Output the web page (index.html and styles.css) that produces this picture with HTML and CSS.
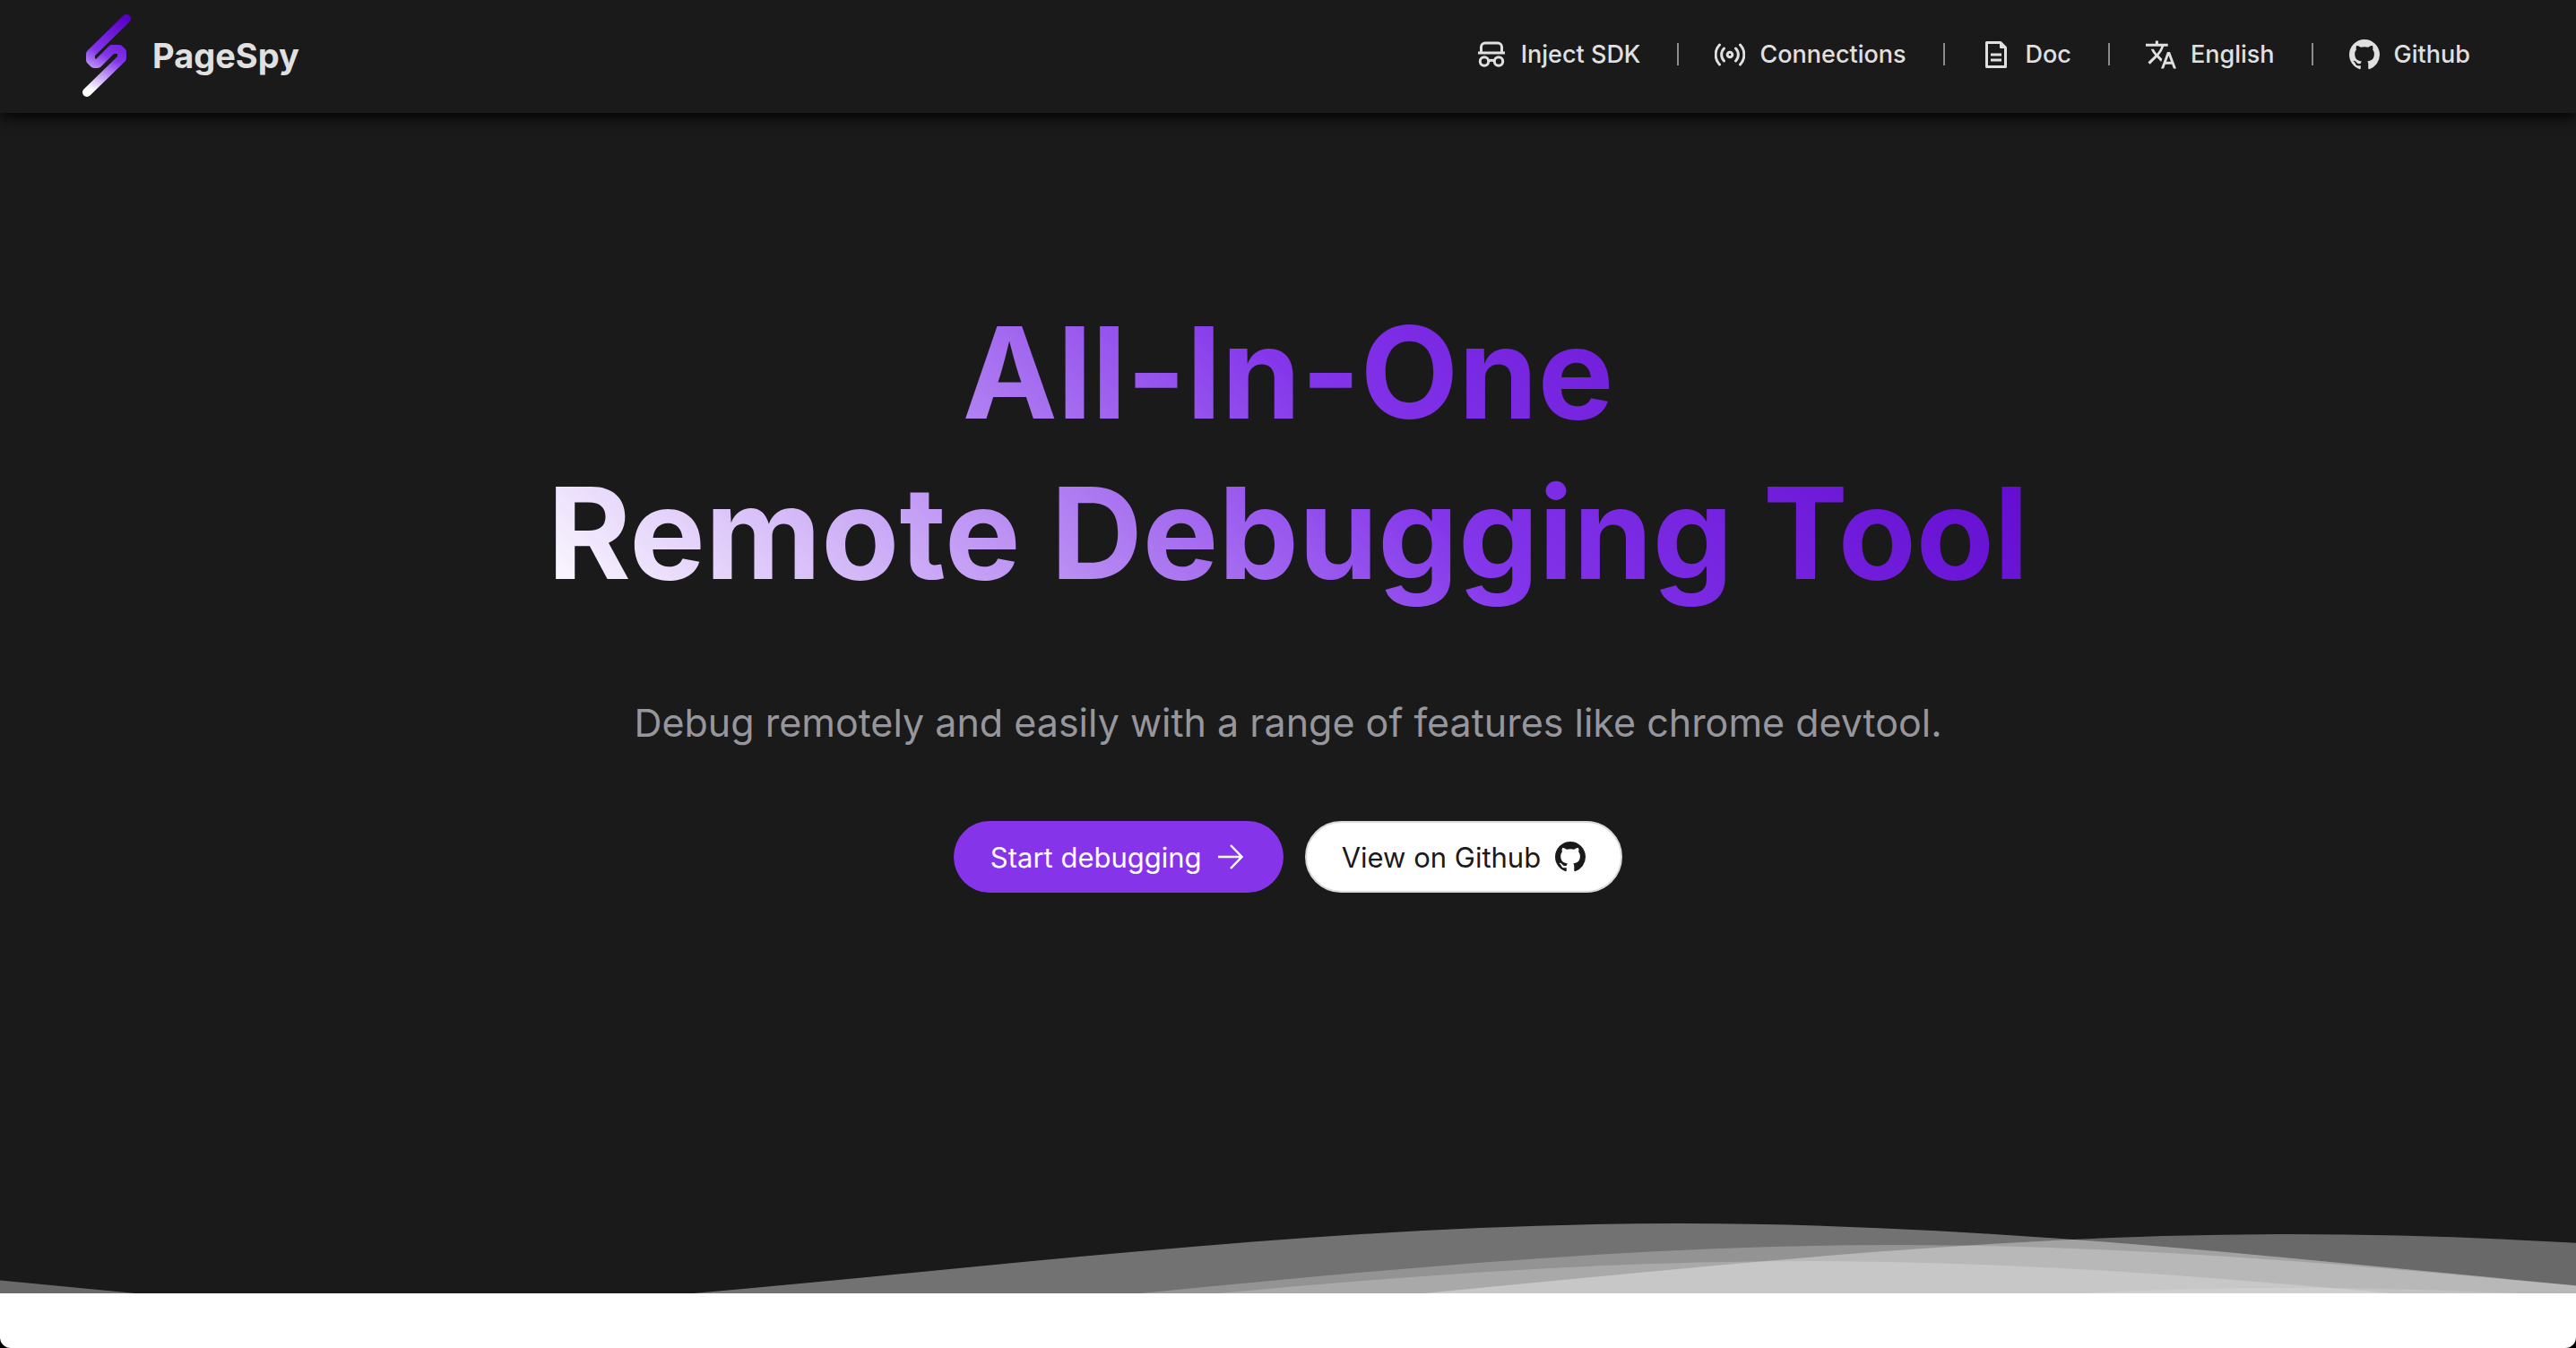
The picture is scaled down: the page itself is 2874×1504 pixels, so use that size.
FILE: index.html
```html
<!DOCTYPE html>
<html lang="en">
<head>
<meta charset="utf-8">
<meta name="viewport" content="width=device-width, initial-scale=1">
<title>PageSpy</title>
<link rel="stylesheet" href="styles.css">
</head>
<body>
<svg class="defs" aria-hidden="true">
  <symbol id="github" viewBox="0 0 16 16"><path fill="currentColor" d="M8 0C3.58 0 0 3.58 0 8c0 3.54 2.29 6.53 5.47 7.59.4.07.55-.17.55-.38 0-.19-.01-.82-.01-1.49-2.01.37-2.53-.49-2.69-.94-.09-.23-.48-.94-.82-1.13-.28-.15-.68-.52-.01-.53.63-.01 1.08.58 1.23.82.72 1.21 1.87.87 2.33.66.07-.52.28-.87.51-1.07-1.78-.2-3.64-.89-3.64-3.95 0-.87.31-1.59.82-2.15-.08-.2-.36-1.02.08-2.12 0 0 .67-.21 2.2.82.64-.18 1.32-.27 2-.27s1.36.09 2 .27c1.53-1.04 2.2-.82 2.2-.82.44 1.1.16 1.92.08 2.12.51.56.82 1.27.82 2.15 0 3.07-1.87 3.75-3.65 3.95.29.25.54.73.54 1.48 0 1.07-.01 1.93-.01 2.2 0 .21.15.46.55.38A8.01 8.01 0 0 0 16 8c0-4.42-3.58-8-8-8z"/></symbol>
</svg>
<header class="header">
  <a class="brand" href="#">
    <svg class="logo" viewBox="0 0 54 92" aria-hidden="true">
      <defs><linearGradient id="logo-fill" gradientUnits="userSpaceOnUse" x1="48" y1="4" x2="6" y2="88">
        <stop offset="0" stop-color="#5a00c8"/><stop offset=".5" stop-color="#8335ea"/><stop offset=".95" stop-color="#fff"/>
      </linearGradient></defs>
      <path fill="none" stroke="url(#logo-fill)" stroke-width="10" stroke-linecap="round" stroke-linejoin="round" d="M49 5 9 44v7l4 4h4L33 39h8l3 3v7L5 87"/>
    </svg>
    <span class="brand-name">PageSpy</span>
  </a>
  <nav class="nav">
    <a class="nav-link" href="#">
      <svg class="icon" viewBox="0 0 34 34" fill="none" stroke="currentColor" stroke-width="3" aria-hidden="true"><path d="M2 15h30M5.500 15V8.500a4.500 4.500 0 0 1 4.500-4.500h14a4.500 4.500 0 0 1 4.500 4.500V15M13.500 24q3.500-1.500 7 0"/><circle cx="9" cy="24.500" r="4.700"/><circle cx="25" cy="24.500" r="4.700"/></svg>
      Inject SDK</a>
    <a class="nav-link" href="#">
      <svg class="icon" viewBox="0 0 34 34" fill="none" stroke="currentColor" stroke-width="3" stroke-linecap="round" aria-hidden="true"><circle cx="17" cy="17" r="2.800"/><path d="M10.500 10a10 10 0 0 0 0 14M23.500 10a10 10 0 0 1 0 14M5.500 6a16 16 0 0 0 0 22M28.500 6a16 16 0 0 1 0 22"/></svg>
      Connections</a>
    <a class="nav-link" href="#">
      <svg class="icon" viewBox="0 0 34 34" fill="none" stroke="currentColor" stroke-width="3" stroke-linejoin="round" aria-hidden="true"><path d="M6.500 3.500h15.500l5.500 5.500v21.500h-21zM11 17h12M11 23h12"/><path d="M21.500 3.500v6h6z" fill="currentColor" stroke-width="1"/></svg>
      Doc</a>
    <a class="nav-link" href="#">
      <svg class="icon" viewBox="1 1 22 22" aria-hidden="true"><path fill="currentColor" d="m12.870 15.070-2.540-2.510.03-.03A17.520 17.520 0 0 0 14.070 6H17V4h-7V2H8v2H1v1.990h11.170C11.500 7.920 10.440 9.750 9 11.350 8.070 10.320 7.300 9.190 6.690 8h-2c.73 1.630 1.730 3.170 2.980 4.560l-5.090 5.020L4 19l5-5 3.110 3.110.76-2.040zM18.500 10h-2L12 22h2l1.120-3h4.750L21 22h2l-4.500-12zm-2.620 7 1.620-4.330L19.120 17h-3.240z"/></svg>
      English</a>
    <a class="nav-link" href="#">
      <svg class="icon" aria-hidden="true"><use href="#github"/></svg>
      Github</a>
  </nav>
</header>
<main>
  <section class="hero">
    <h1 class="title">All-In-One<br>Remote Debugging Tool</h1>
    <p class="subtitle">Debug remotely and easily with a range of features like chrome devtool.</p>
    <div class="actions">
      <button class="button button-primary" type="button">Start debugging
        <svg class="icon" viewBox="0 0 34 34" fill="none" stroke="currentColor" stroke-width="2.500" aria-hidden="true"><path d="M2 17h26M16 4l12.500 13L16 30"/></svg>
      </button>
      <button class="button button-plain" type="button">View on Github
        <svg class="icon" aria-hidden="true"><use href="#github"/></svg>
      </button>
    </div>
    <svg class="waves" viewBox="0 0 150 13" preserveAspectRatio="none" aria-hidden="true">
      <defs><path id="swell" d="M-88 18C-58 18-30 0 0 0s58 18 88 18v22H-88z"/></defs>
      <g fill="#fff">
        <use href="#swell" x="97.700" fill-opacity=".39"/>
        <use href="#swell" x="133.400" y="2" fill-opacity=".345"/>
        <use href="#swell" x="-42.600" y="2" fill-opacity=".345"/>
        <use href="#swell" x="110.400" y="4" fill-opacity=".24"/>
        <use href="#swell" x="105.100" y="7" fill-opacity=".21"/>
        <use href="#swell" x="133.800" y="12" fill-opacity=".15"/>
      </g>
    </svg>
  </section>
  <section class="next"></section>
</main>
</body>
</html>
```
FILE: styles.css
```css
* {
  box-sizing: border-box;
}

body {
  display: flex;
  flex-direction: column;
  min-height: 100vh;
  margin: 0;
  background: #000;
  font-family: Inter, "Liberation Sans", sans-serif;
}

.defs {
  display: none;
}

.header {
  position: relative;
  z-index: 1;
  display: flex;
  align-items: center;
  justify-content: space-between;
  padding: 16px 118px 18px 92px;
  background: #1a1a1a;
  color: #e0e0e0;
  box-shadow: 0 4px 16px #000;
}

.brand {
  display: flex;
  align-items: center;
  gap: 24px;
  color: inherit;
  text-decoration: none;
}

.logo {
  width: 54px;
  height: 92px;
}

.brand-name {
  font-size: 38px;
  font-weight: 700;
  line-height: 48px;
}

.nav {
  display: flex;
  align-items: center;
  padding-bottom: 3px;
}

.nav-link {
  display: flex;
  align-items: center;
  gap: 16px;
  color: inherit;
  font-size: 27px;
  font-weight: 500;
  line-height: 34px;
  text-decoration: none;
}

.nav-link + .nav-link::before {
  width: 2px;
  height: 25px;
  margin: 0 24px 0 41px;
  background: #8c8c8c;
  content: "";
}

.icon {
  flex: none;
  width: 34px;
  height: 34px;
}

main {
  display: flex;
  flex: 1;
  flex-direction: column;
}

.hero {
  display: flex;
  flex-direction: column;
  align-items: center;
  padding-top: 200px;
  background: #1a1a1a;
}

.title {
  margin: 0;
  background: linear-gradient(45deg, #fff, #8335ea 55%, #5a00c8);
  background-clip: text;
  color: transparent;
  font-size: 142px;
  font-weight: 700;
  line-height: 179px;
  text-align: center;
}

.subtitle {
  margin: 92px 0 80px;
  color: #96969c;
  font-size: 43px;
  line-height: 60px;
}

.actions {
  display: flex;
  gap: 24px;
}

.button {
  display: flex;
  align-items: center;
  gap: 16px;
  height: 80px;
  padding: 0 41px;
  border: 0;
  border-radius: 40px;
  font-family: inherit;
  font-size: 31px;
}

.button-primary {
  background: #8634e9;
  color: #fff;
}

.button-plain {
  padding: 0 39px;
  border: 2px solid #d9d9d9;
  background: #fff;
  color: #1a1a1a;
}

.waves {
  width: 100%;
  height: 78px;
  margin-top: 369px;
}

.next {
  flex: 1;
  min-height: 61px;
  border-radius: 0 0 12px 12px;
  background: #fff;
}
```
